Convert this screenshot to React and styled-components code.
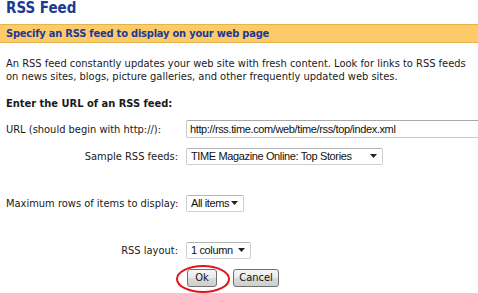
import React from "react";
import styled, { createGlobalStyle } from "styled-components";

const Global = createGlobalStyle`
  html, body { margin: 0; padding: 0; background: #fff; }
  body { font-family: "DejaVu Sans Condensed", "DejaVu Sans", Verdana, sans-serif; font-size: 11px; color: #1a1a1a; }
`;

const Page = styled.div`
  position: relative;
  width: 478px;
  height: 293px;
  overflow: hidden;
`;

const Title = styled.h1`
  margin: 0;
  padding: 1px 6px 0;
  font-size: 15px;
  line-height: 14px;
  font-weight: bold;
  color: #1c3a94;
`;

const Bar = styled.div`
  margin-top: 9px;
  height: 17px;
  display: flex;
  align-items: center;
  padding: 0 6px;
  background: #fdca69;
  border-top: 1px solid #e6b34e;
  border-bottom: 1px solid #e6b34e;
  font-weight: bold;
  letter-spacing: -0.2px;
  color: #1c3a94;
`;

const Intro = styled.p`
  margin: 14px 0 0;
  padding: 0 6px;
  line-height: 13px;
`;

const SectionHead = styled.div`
  margin-top: 14px;
  padding: 0 6px;
  font-weight: bold;
  line-height: 13px;
`;

const Form = styled.div`
  display: grid;
  grid-template-columns: 172px 1fr;
  column-gap: 8px;
  padding-left: 6px;
`;

const Label = styled.div`
  margin-top: ${(p) => p.$top}px;
  white-space: nowrap;
  display: flex;
  align-items: center;
  justify-content: ${(p) => (p.$left ? "flex-start" : "flex-end")};
  height: 18px;
`;

const Cell = styled.div`
  margin-top: ${(p) => p.$top}px;
  display: flex;
  align-items: center;
  height: 18px;
`;

const controlFont = `
  font-family: "Liberation Sans", Arial, sans-serif;
  font-size: 11px;
  letter-spacing: -0.37px;
  color: #111;
  white-space: nowrap;
`;

const TextInput = styled.div`
  box-sizing: border-box;
  width: 300px;
  height: 18px;
  border: 1px solid #c9c9c9;
  border-top-color: #a9a9a9;
  border-radius: 2px;
  padding: 0 3px;
  display: flex;
  align-items: center;
  ${controlFont}
`;

const Select = styled.div`
  box-sizing: border-box;
  width: ${(p) => p.$w}px;
  height: 17px;
  border: 1px solid #cfcfcf;
  border-top-color: #b5b5b5;
  border-radius: 2px;
  padding: 0 5px 0 4px;
  display: flex;
  align-items: center;
  justify-content: space-between;
  ${controlFont}
`;

const Arrow = () => (
  <svg width="7" height="4" viewBox="0 0 7 4">
    <path d="M0 0 H7 L3.5 4 Z" fill="#222" />
  </svg>
);

const Button = styled.button`
  box-sizing: border-box;
  height: 18px;
  width: ${(p) => p.$w}px;
  padding: 0;
  border: 1px solid #707070;
  border-radius: 3px;
  background: linear-gradient(#f6f6f6 0%, #e9e9e9 50%, #d9d9d9 51%, #cfcfcf 100%);
  font-family: "DejaVu Sans Condensed", "DejaVu Sans", Tahoma, sans-serif;
  font-size: 11px;
  color: #111;
  line-height: 16px;
`;

const Buttons = styled.div`
  grid-column: 2;
  margin-top: 10px;
  display: flex;
  gap: 16px;
  margin-left: 1px;
`;

const Highlight = styled.svg`
  position: absolute;
  left: 175px;
  top: 265px;
`;

export default function App() {
  return (
    <Page>
      <Global />
      <Title>RSS Feed</Title>
      <Bar>Specify an RSS feed to display on your web page</Bar>
      <Intro>
        An RSS feed constantly updates your web site with fresh content. Look for links to RSS feeds
        on news sites, blogs, picture galleries, and other frequently updated web sites.
      </Intro>
      <SectionHead>Enter the URL of an RSS feed:</SectionHead>
      <Form>
        <Label $left $top={10}>URL (should begin with http://):</Label>
        <Cell $top={10}>
          <TextInput>http://rss.time.com/web/time/rss/top/index.xml</TextInput>
        </Cell>
        <Label $top={9}>Sample RSS feeds:</Label>
        <Cell $top={9}>
          <Select $w={197}>
            <span>TIME Magazine Online: Top Stories</span>
            <Arrow />
          </Select>
        </Cell>
        <Label $left $top={29}>Maximum rows of items to display:</Label>
        <Cell $top={29}>
          <Select $w={58}>
            <span>All items</span>
            <Arrow />
          </Select>
        </Cell>
        <Label $top={29}>RSS layout:</Label>
        <Cell $top={29}>
          <Select $w={65}>
            <span>1 column</span>
            <Arrow />
          </Select>
        </Cell>
        <Buttons>
          <Button $w={30}>Ok</Button>
          <Button $w={46}>Cancel</Button>
        </Buttons>
      </Form>
      <Highlight width="56" height="30" viewBox="0 0 56 30">
        <ellipse cx="28" cy="14" rx="26" ry="13" fill="none" stroke="#e0161c" strokeWidth="2" />
      </Highlight>
    </Page>
  );
}
